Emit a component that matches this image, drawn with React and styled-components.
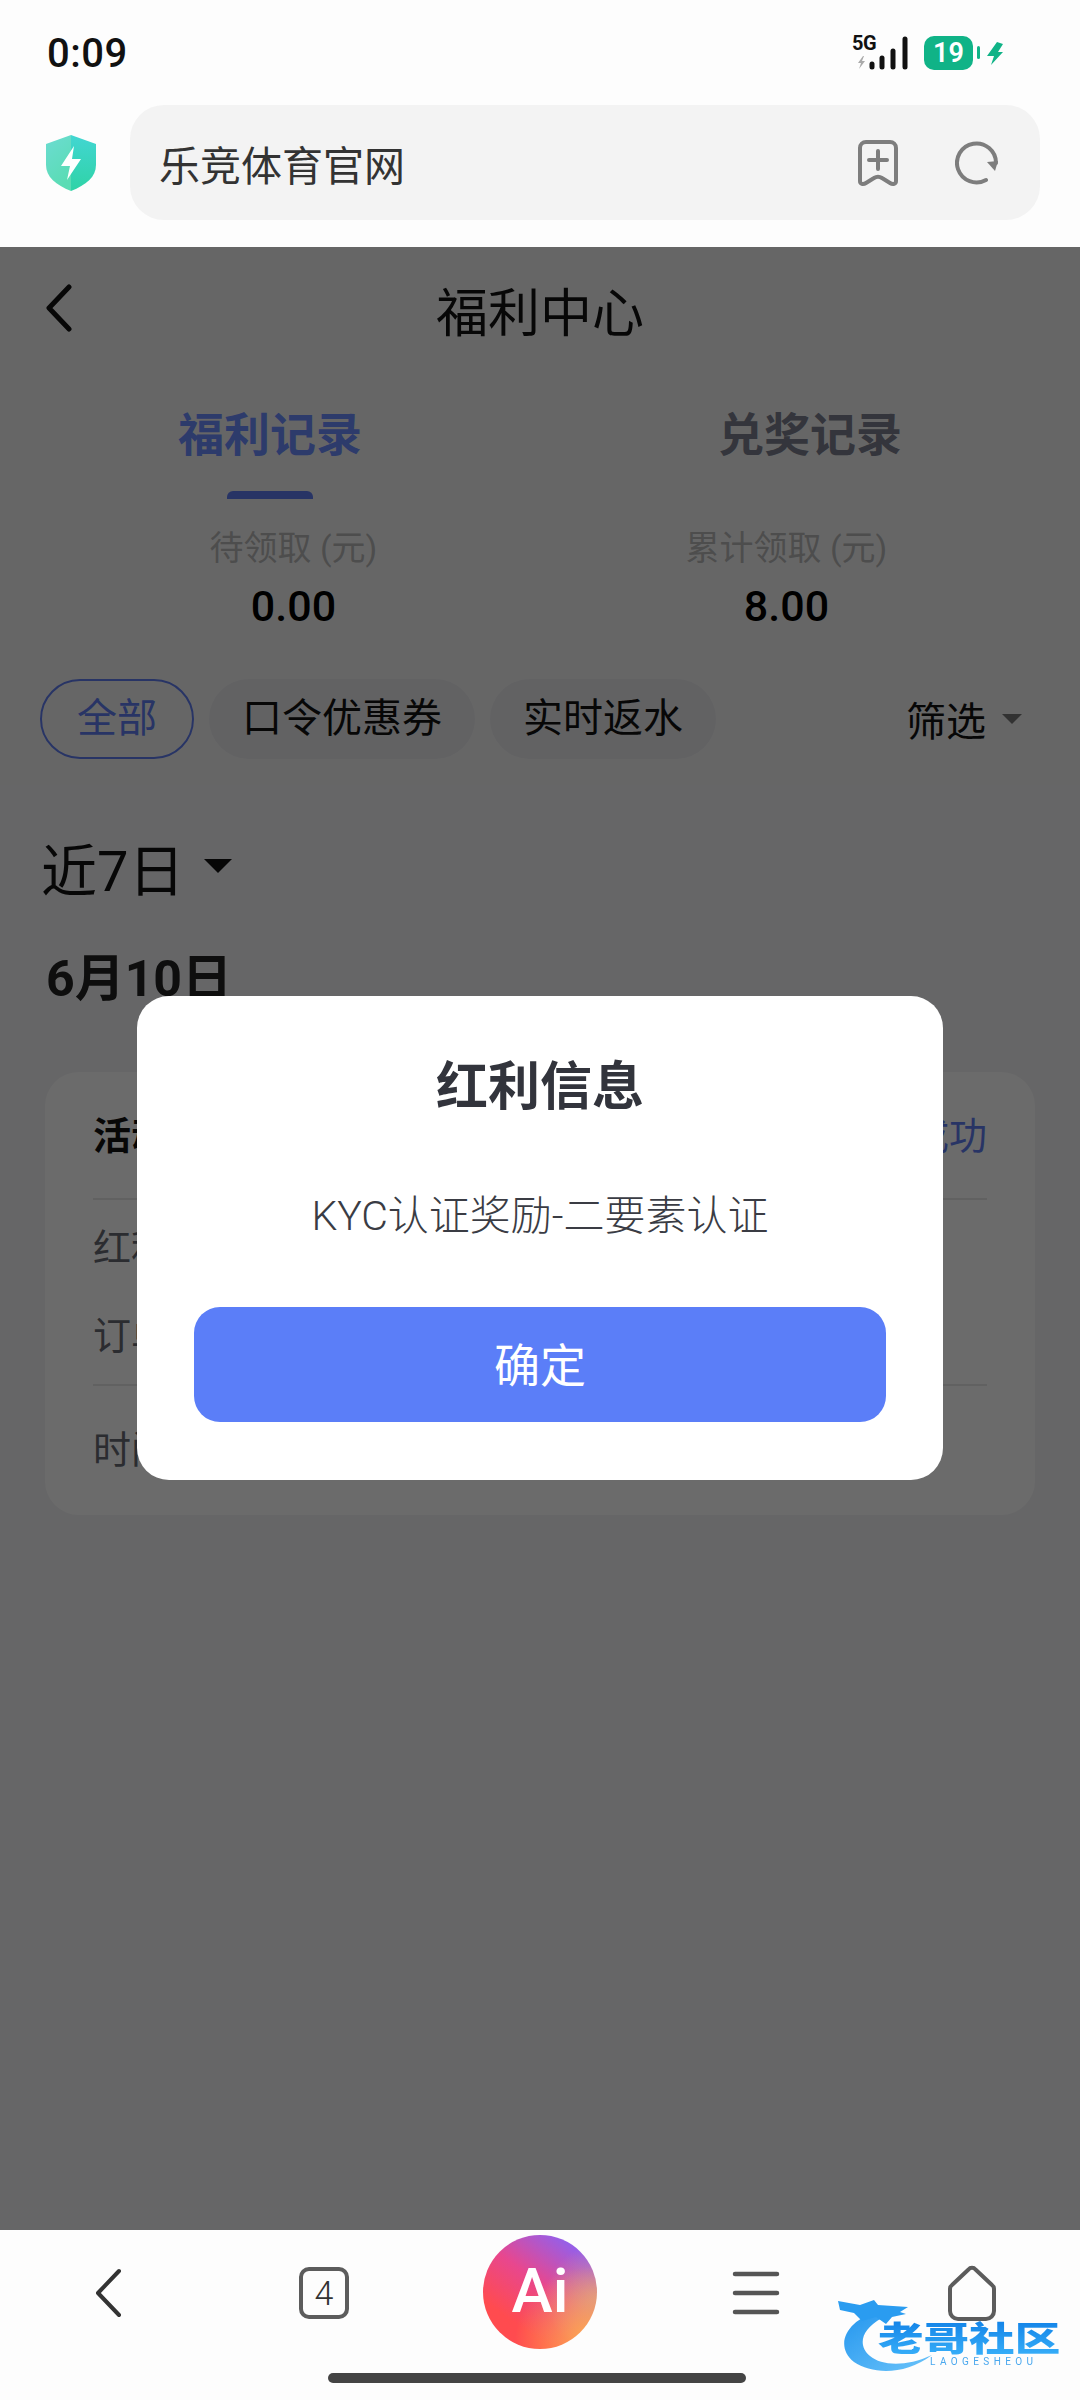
import React from 'react';
import styled, { createGlobalStyle } from 'styled-components';

const GlobalStyle = createGlobalStyle`
  html, body { margin: 0; padding: 0; background: #fff; }
  * { box-sizing: border-box; }
  body { font-family: Roboto, "Noto Sans CJK SC", sans-serif; }
`;

const Screen = styled.div`
  position: relative;
  width: 1080px;
  height: 2400px;
  display: flex;
  flex-direction: column;
  overflow: hidden;
  background: #fdfdfd;
`;

/* browser chrome */
const TopChrome = styled.header`
  height: 247px;
  flex: none;
  background: #fdfdfd;
`;

const StatusBar = styled.div`
  height: 105px;
  padding: 0 77px 0 47px;
  display: flex;
  align-items: center;
  justify-content: space-between;
`;

const Clock = styled.span`
  font-size: 40px;
  font-weight: 500;
  color: #111;
  letter-spacing: 0.5px;
  margin-top: 2px;
`;

const StatusIcons = styled.div`
  display: flex;
  align-items: center;
  gap: 4px;
`;

const NetworkWrap = styled.div`
  position: relative;
  width: 56px;
  height: 34px;
  margin-right: 12px;
`;

const FiveG = styled.span`
  position: absolute;
  left: 0;
  top: -3px;
  font-size: 20px;
  line-height: 20px;
  font-weight: 700;
  letter-spacing: -0.5px;
  color: #111;
`;

const Battery = styled.div`
  width: 49px;
  height: 34px;
  border-radius: 10px;
  background: #10b387;
  color: #fff;
  font-size: 27px;
  font-weight: 600;
  line-height: 34px;
  text-align: center;
`;

const AddressRow = styled.div`
  display: flex;
  align-items: center;
  height: 115px;
  padding: 0 40px 0 46px;
`;

const AddressBox = styled.div`
  margin-left: 34px;
  flex: 1;
  height: 115px;
  border-radius: 34px;
  background: #f3f3f3;
  display: flex;
  align-items: center;
  padding: 0 41px 0 29px;
`;

const AddressText = styled.span`
  flex: 1;
  font-size: 41px;
  color: #333;
`;

const AddressIcons = styled.div`
  display: flex;
  align-items: center;
  gap: 56px;
`;

/* page under the dim layer */
const Main = styled.main`
  position: relative;
  flex: 1;
  min-height: 0;
  background: #f4f4f6;
`;

const TopSection = styled.section`
  height: 538px;
  background: #f4f4f4;
`;

const PageHeader = styled.div`
  position: relative;
  height: 130px;
  padding-bottom: 6px;
  display: flex;
  align-items: center;
  justify-content: center;
`;

const BackButton = styled.span`
  position: absolute;
  left: 44px;
  top: 37px;
  display: flex;
`;

const PageTitle = styled.h1`
  margin: 0;
  font-size: 52px;
  font-weight: 400;
  color: #111;
`;

const Tabs = styled.div`
  display: grid;
  grid-template-columns: 1fr 1fr;
`;

const Tab = styled.div`
  display: flex;
  flex-direction: column;
  align-items: center;
`;

const TabLabel = styled.span`
  margin-top: 28px;
  height: 60px;
  line-height: 60px;
  font-size: 46px;
  font-weight: 700;
  color: ${p => (p.$active ? '#6d8cff' : '#7c7f8f')};
`;

const TabBar = styled.span`
  margin-top: 26px;
  width: 86px;
  height: 8px;
  border-radius: 6px 6px 0 0;
  background: ${p => (p.$active ? '#5f7df0' : 'transparent')};
`;

const Stats = styled.div`
  display: grid;
  grid-template-columns: 1fr 1fr;
  padding: 0 47px;
  margin-top: 27px;
`;

const Stat = styled.div`
  text-align: center;
`;

const StatLabel = styled.div`
  font-size: 34px;
  line-height: 44px;
  color: #b8b8b8;
`;

const StatValue = styled.div`
  margin-top: 11px;
  font-size: 43px;
  line-height: 50px;
  font-weight: 500;
  color: #000;
`;

const ChipRow = styled.div`
  display: flex;
  align-items: center;
  gap: 15px;
  margin-top: 48px;
  padding: 0 58px 0 40px;
`;

const Chip = styled.span`
  height: 80px;
  line-height: 76px;
  padding: 0 ${p => (p.$active ? 35 : 31)}px;
  border-radius: 40px;
  font-size: 40px;
  color: ${p => (p.$active ? '#5f7df0' : '#111')};
  background: ${p => (p.$active ? 'transparent' : '#e9e9ed')};
  border: 2px solid ${p => (p.$active ? '#5f7df0' : 'transparent')};
`;

const Filter = styled.span`
  margin-left: auto;
  display: flex;
  align-items: center;
  gap: 16px;
  font-size: 40px;
  color: #111;
`;

const DownTriangle = styled.i`
  display: block;
  width: 0;
  height: 0;
  border-left: ${p => p.$size}px solid transparent;
  border-right: ${p => p.$size}px solid transparent;
  border-top: ${p => p.$size * 1.05}px solid ${p => p.$color};
`;

const ListSection = styled.section`
  padding: 50px 45px 0;
`;

const RangeRow = styled.div`
  display: flex;
  align-items: center;
  gap: 20px;
  height: 66px;
  padding-bottom: 4px;
  margin-left: -4px;
  font-size: 56px;
  color: #111;
`;

const DateTitle = styled.h2`
  margin: 46px 0 0 1px;
  font-size: 50px;
  line-height: 64px;
  font-weight: 700;
  color: #222;
`;

const Card = styled.article`
  margin-top: 61px;
  height: 443px;
  padding: 0 48px;
  border-radius: 34px;
  background: #fff;
`;

const CardHead = styled.div`
  height: 128px;
  padding-bottom: 6px;
  display: flex;
  align-items: center;
  justify-content: space-between;
  font-size: 38px;
  border-bottom: 2px solid #e6e6e6;
`;

const CardName = styled.span`
  font-weight: 700;
  color: #111;
`;

const CardState = styled.span`
  color: #5f7df0;
`;

const CardRows = styled.div`
  padding-bottom: 8px;
  border-bottom: 2px solid #e6e6e6;
`;

const CardRow = styled.div`
  height: ${p => p.$h}px;
  display: flex;
  align-items: center;
  font-size: 38px;
  color: #666a73;
`;

/* dim layer and dialog */
const Dim = styled.div`
  position: absolute;
  inset: 0;
  padding-bottom: 2px;
  background: rgba(0, 0, 0, 0.58);
  display: flex;
  align-items: center;
  justify-content: center;
`;

const Dialog = styled.div`
  width: 806px;
  height: 484px;
  padding: 0 58px;
  border-radius: 32px;
  background: #fff;
  display: flex;
  flex-direction: column;
  align-items: center;
`;

const DialogTitle = styled.h3`
  margin: 60px 0 0;
  font-size: 52px;
  line-height: 64px;
  font-weight: 700;
  color: #32343c;
`;

const DialogText = styled.p`
  margin: 69px 0 0;
  font-size: 41px;
  line-height: 54px;
  font-weight: 300;
  color: #3a3c44;
`;

const ConfirmButton = styled.button`
  margin-top: 64px;
  width: 692px;
  height: 115px;
  flex: none;
  border: 0;
  padding: 0 0 4px;
  border-radius: 26px;
  background: #5b7ef8;
  color: #fff;
  font-family: inherit;
  font-size: 46px;
`;

/* bottom nav */
const BottomNav = styled.footer`
  position: relative;
  height: 170px;
  flex: none;
  background: #fdfdfd;
`;

const NavIcons = styled.div`
  height: 126px;
  display: grid;
  grid-template-columns: repeat(5, 1fr);
  align-items: center;
  justify-items: center;
`;

const AiBall = styled.div`
  width: 114px;
  height: 114px;
  border-radius: 50%;
  margin-top: -2px;
  background:
    radial-gradient(circle at 95% 95%, #ffb04c 0%, rgba(255, 170, 80, 0) 50%),
    radial-gradient(circle at 100% 55%, rgba(214, 150, 150, 0.9) 0%, rgba(214, 150, 150, 0) 40%),
    linear-gradient(35deg, #ff4b4f 25%, #e8478e 55%, #8a62f5 90%);
  color: #fff;
  font-size: 62px;
  font-weight: 500;
  line-height: 112px;
  text-align: center;
`;

const HomeIndicator = styled.div`
  position: absolute;
  left: 328px;
  bottom: 17px;
  width: 418px;
  height: 10px;
  border-radius: 5px;
  background: #444;
`;

const Watermark = styled.div`
  position: absolute;
  left: 836px;
  top: 70px;
  width: 226px;
  height: 84px;
  filter: blur(0.7px);
`;

const WatermarkName = styled.span`
  position: absolute;
  left: 42px;
  top: 17px;
  font-size: 34px;
  line-height: 44px;
  font-weight: 900;
  white-space: nowrap;
  transform: scaleX(1.34);
  transform-origin: left center;
  background: linear-gradient(180deg, #0f7fe6, #3db5fb);
  -webkit-background-clip: text;
  background-clip: text;
  color: transparent;
`;

const WatermarkSub = styled.span`
  position: absolute;
  left: 94px;
  top: 56px;
  font-size: 10px;
  line-height: 12px;
  letter-spacing: 4.4px;
  color: #4aa8ee;
`;

const TabCount = styled.div`
  width: 50px;
  height: 52px;
  border: 4px solid #5c5c5c;
  border-radius: 10px;
  color: #333;
  font-size: 34px;
  line-height: 44px;
  font-weight: 300;
  text-align: center;
`;

function Signal() {
  return (
    <svg width="56" height="34" viewBox="0 0 56 34" style={{ display: 'block' }}>
      <path d="M11 20l-5 7h3l-2 6 6-8h-3l2-5z" fill="#aaa" />
      <g stroke="#111" strokeWidth="5" strokeLinecap="round">
        <path d="M20 28v3" />
        <path d="M30 22v9" />
        <path d="M41 15v16" />
        <path d="M53 3v28" />
      </g>
    </svg>
  );
}

function ChargeBolt() {
  return (
    <svg width="26" height="30" viewBox="0 0 26 30">
      <rect x="0" y="8" width="3" height="13" rx="1.500" fill="#10b387" />
      <path d="M20 4l6 2-5 8h5L14 27l3-9h-7z" fill="#10b387" />
    </svg>
  );
}

function Shield() {
  return (
    <svg width="50" height="56" viewBox="0 0 50 56">
      <defs>
        <linearGradient id="shL" x1="0" y1="0" x2="0.4" y2="1">
          <stop offset="0" stopColor="#6cdcd2" />
          <stop offset="1" stopColor="#5adcb4" />
        </linearGradient>
        <linearGradient id="shR" x1="0" y1="0" x2="0" y2="1">
          <stop offset="0" stopColor="#42d6d2" />
          <stop offset="1" stopColor="#2fd3a6" />
        </linearGradient>
      </defs>
      <path d="M25 0L0 9v21c0 12 10 20 25 26z" fill="url(#shL)" />
      <path d="M25 0l25 9v21c0 12-10 20-25 26z" fill="url(#shR)" />
      <path d="M28 11L15 31h9l-3 14 14-21h-9z" fill="#fff" />
    </svg>
  );
}

function BookmarkAdd() {
  return (
    <svg width="42" height="48" viewBox="0 0 42 48" fill="none" stroke="#7d7d7d" strokeWidth="4" strokeLinecap="round" strokeLinejoin="round">
      <path d="M9 3h24a6 6 0 0 1 6 6v33c0 3-3 4-6 2l-8-5c-3-2-5-2-8 0l-8 5c-3 2-6 1-6-2V9a6 6 0 0 1 6-6z" />
      <path d="M21 12v18M12 21h18" />
    </svg>
  );
}

function Reload() {
  return (
    <svg width="44" height="44" viewBox="0 0 44 44" fill="none">
      <path d="M31 39A19.500 19.500 0 1 1 41 22" stroke="#7d7d7d" strokeWidth="4" strokeLinecap="round" />
      <path d="M32 21l11-1-3 10z" fill="#7d7d7d" />
    </svg>
  );
}

function PageBack() {
  return (
    <svg width="30" height="48" viewBox="0 0 30 48" fill="none" stroke="#111" strokeWidth="5" strokeLinecap="round" strokeLinejoin="round">
      <path d="M25 3L5 24l20 21" />
    </svg>
  );
}

function NavBack() {
  return (
    <svg width="30" height="50" viewBox="0 0 30 50" fill="none" stroke="#333" strokeWidth="4" strokeLinecap="round" strokeLinejoin="round">
      <path d="M26 3L5 25l21 22" />
    </svg>
  );
}

function Menu() {
  return (
    <svg width="48" height="46" viewBox="0 0 48 46" fill="none" stroke="#555" strokeWidth="4.500" strokeLinecap="round">
      <path d="M3 4h42M3 23h42M3 42h42" />
    </svg>
  );
}

function Home() {
  return (
    <svg width="52" height="56" viewBox="0 0 52 56" fill="none" stroke="#5c5c5c" strokeWidth="4" strokeLinejoin="round">
      <path d="M22.500 4.500a4.500 4.500 0 0 1 7 0L46 20a5 5 0 0 1 2 4v22a8 8 0 0 1-8 8H12a8 8 0 0 1-8-8V24a5 5 0 0 1 2-4z" />
    </svg>
  );
}

function DragonMark() {
  return (
    <svg width="226" height="84" viewBox="0 0 226 84" style={{ display: 'block', overflow: 'visible' }}>
      <defs>
        <linearGradient id="drg" x1="0" y1="0" x2="1" y2="1">
          <stop offset="0" stopColor="#2496ee" />
          <stop offset="1" stopColor="#6cc4fa" />
        </linearGradient>
      </defs>
      <path d="M42 12C14 18-4 44 18 62c18 12 50 14 78-7-26 12-50 11-62 1C22 46 24 30 46 18z" fill="url(#drg)" />
      <path d="M2 1l22 4 14-5 4 5 30 2-8 5 6 2-14 3-6 7-10-7-14 4-8-8-14-3z" fill="#2a9cf0" />
    </svg>
  );
}

export default function App() {
  return (
    <Screen>
      <GlobalStyle />
      <TopChrome>
        <StatusBar>
          <Clock>0:09</Clock>
          <StatusIcons>
            <NetworkWrap>
              <FiveG>5G</FiveG>
              <Signal />
            </NetworkWrap>
            <Battery>19</Battery>
            <ChargeBolt />
          </StatusIcons>
        </StatusBar>
        <AddressRow>
          <Shield />
          <AddressBox>
            <AddressText>乐竞体育官网</AddressText>
            <AddressIcons>
              <BookmarkAdd />
              <Reload />
            </AddressIcons>
          </AddressBox>
        </AddressRow>
      </TopChrome>

      <Main>
        <TopSection>
          <PageHeader>
            <BackButton><PageBack /></BackButton>
            <PageTitle>福利中心</PageTitle>
          </PageHeader>
          <Tabs>
            <Tab>
              <TabLabel $active>福利记录</TabLabel>
              <TabBar $active />
            </Tab>
            <Tab>
              <TabLabel>兑奖记录</TabLabel>
              <TabBar />
            </Tab>
          </Tabs>
          <Stats>
            <Stat>
              <StatLabel>待领取 (元)</StatLabel>
              <StatValue>0.00</StatValue>
            </Stat>
            <Stat>
              <StatLabel>累计领取 (元)</StatLabel>
              <StatValue>8.00</StatValue>
            </Stat>
          </Stats>
          <ChipRow>
            <Chip $active>全部</Chip>
            <Chip>口令优惠券</Chip>
            <Chip>实时返水</Chip>
            <Filter>筛选<DownTriangle $size={10} $color="#777" /></Filter>
          </ChipRow>
        </TopSection>

        <ListSection>
          <RangeRow>近7日<DownTriangle $size={14} $color="#111" /></RangeRow>
          <DateTitle>6月10日</DateTitle>
          <Card>
            <CardHead>
              <CardName>活动名称</CardName>
              <CardState>领取成功</CardState>
            </CardHead>
            <CardRows>
              <CardRow $h={88}>红利金额</CardRow>
              <CardRow $h={88}>订单号</CardRow>
            </CardRows>
            <CardRow $h={120}>时间</CardRow>
          </Card>
        </ListSection>

        <Dim>
          <Dialog>
            <DialogTitle>红利信息</DialogTitle>
            <DialogText>KYC认证奖励-二要素认证</DialogText>
            <ConfirmButton>确定</ConfirmButton>
          </Dialog>
        </Dim>
      </Main>

      <BottomNav>
        <NavIcons>
          <NavBack />
          <TabCount>4</TabCount>
          <AiBall>Ai</AiBall>
          <Menu />
          <Home />
        </NavIcons>
        <HomeIndicator />
        <Watermark>
          <DragonMark />
          <WatermarkName>老哥社区</WatermarkName>
          <WatermarkSub>LAOGESHEOU</WatermarkSub>
        </Watermark>
      </BottomNav>
    </Screen>
  );
}
